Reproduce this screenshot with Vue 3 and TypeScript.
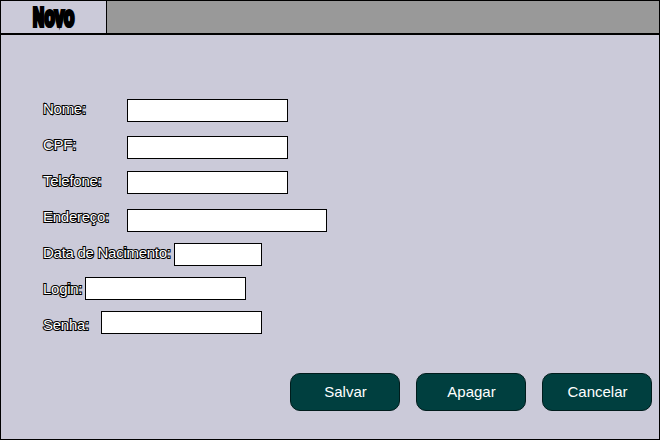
<script setup lang="ts">
interface Field {
  id: string
  label: string
}

const fields: Field[] = [
  { id: 'nome', label: 'Nome:' },
  { id: 'cpf', label: 'CPF:' },
  { id: 'telefone', label: 'Telefone:' },
  { id: 'endereco', label: 'Endereço:' },
  { id: 'nascimento', label: 'Data de Nacimento:' },
  { id: 'login', label: 'Login:' },
  { id: 'senha', label: 'Senha:' },
]

const actions: string[] = ['Salvar', 'Apagar', 'Cancelar']
</script>

<template>
  <main class="window">
    <header class="bar">
      <div class="tab">
        <svg class="title" width="60" height="30" viewBox="0 0 60 30">
          <text transform="translate(9 24.4) scale(0.6 1)"><tspan class="cap">N</tspan><tspan class="low" dx="0.6">ovo</tspan></text>
        </svg>
      </div>
    </header>
    <form class="form" @submit.prevent>
      <div v-for="f in fields" :key="f.id" class="row" :class="f.id">
        <label class="label" :for="f.id">{{ f.label }}</label>
        <input :id="f.id" class="input" />
      </div>
    </form>
    <footer class="actions">
      <button v-for="a in actions" :key="a" class="button" type="button">{{ a }}</button>
    </footer>
  </main>
</template>

<style>
body {
  margin: 0;
}
</style>

<style scoped>
.window {
  box-sizing: border-box;
  width: 660px;
  height: 440px;
  border: 1px solid #000;
  background: #cbcad9;
  font-family: "Liberation Sans", Arial, sans-serif;
  display: flex;
  flex-direction: column;
  overflow: hidden;
}
.bar {
  display: flex;
  flex: none;
  height: 32px;
  background: #999;
  border-bottom: 2px solid #000;
}
.tab {
  width: 105px;
  background: #cbcad9;
  border-right: 1px solid #000;
  display: flex;
  justify-content: center;
}
.title {
  display: block;
  overflow: visible;
  margin-top: 1px;
  font-family: "Liberation Sans", Arial, sans-serif;
  font-weight: 700;
  stroke: #000;
  stroke-width: 4px;
}
.cap {
  font-size: 25.5px;
}
.low {
  font-size: 28px;
}
.form {
  flex: 1;
  padding: 56px 0 0 42px;
}
.row {
  display: flex;
  height: 36px;
  align-items: flex-start;
}
.label {
  flex: none;
  width: 84px;
  line-height: 36px;
  font-size: 15px;
  letter-spacing: -0.27px;
  white-space: nowrap;
  color: #fff;
  -webkit-text-stroke: 2px #000;
  paint-order: stroke fill;
}
.input {
  box-sizing: border-box;
  width: 161px;
  height: 23px;
  margin: 8px 0 0;
  padding: 0 3px;
  border: 1px solid #000;
  border-radius: 0;
  background: #fff;
  outline: none;
}
.cpf .input {
  margin-top: 9px;
}
.endereco .input {
  width: 200px;
  margin-top: 10px;
}
.nascimento .label {
  width: 131px;
}
.nascimento .input {
  width: 88px;
}
.login .label {
  width: 42px;
}
.login .input {
  margin-top: 6px;
}
.senha .label {
  width: 58px;
}
.senha .input {
  margin-top: 4px;
}
.actions {
  display: flex;
  justify-content: flex-end;
  gap: 16px;
  padding: 0 7px 28px 0;
}
.button {
  box-sizing: border-box;
  width: 110px;
  height: 38px;
  padding: 0 0 2px 1px;
  border: 1px solid #001c1c;
  border-radius: 10px;
  background: #003f3f;
  color: #fff;
  font-family: inherit;
  font-size: 15px;
}
</style>
